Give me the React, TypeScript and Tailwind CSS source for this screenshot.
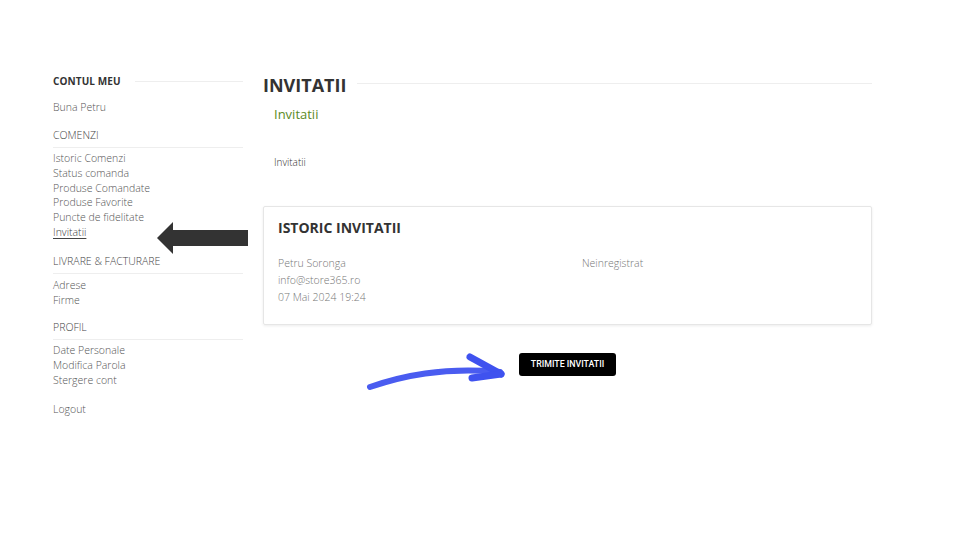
import React from "react";

const items1 = ["Istoric Comenzi", "Status comanda", "Produse Comandate", "Produse Favorite", "Puncte de fidelitate"];

export default function App() {
  return (
    <div className="relative w-[960px] h-[540px] bg-white flex pt-[73px] pl-[53px] font-['Open_Sans',sans-serif] overflow-hidden">
      {/* Sidebar */}
      <div className="w-[190px] flex flex-col">
        <div className="flex items-center gap-[14px] h-[16px]">
          <span className="text-[10px] font-bold text-[#333] leading-[16px] tracking-[0.1px]">CONTUL MEU</span>
          <div className="flex-1 h-px bg-[#eeeeee]" />
        </div>
        <div className="mt-[11px] text-[10.5px] font-light leading-[15px] text-[#555]">Buna Petru</div>
        <div className="mt-[13px] pb-[4px] border-b border-[#eeeeee] text-[10.5px] font-light leading-[15px] text-[#444]">COMENZI</div>
        <div className="mt-[3px] flex flex-col text-[10.5px] font-light leading-[14.8px] text-[#555]">
          {items1.map((t) => (
            <span key={t}>{t}</span>
          ))}
          <span className="underline underline-offset-2 text-[#444]">Invitatii</span>
        </div>
        <div className="mt-[14px] pb-[4px] border-b border-[#eeeeee] text-[10.5px] font-light leading-[15px] text-[#444]">LIVRARE &amp; FACTURARE</div>
        <div className="mt-[4px] flex flex-col text-[10.5px] font-light leading-[14.8px] text-[#555]">
          <span>Adrese</span>
          <span>Firme</span>
        </div>
        <div className="mt-[13px] pb-[4px] border-b border-[#eeeeee] text-[10.5px] font-light leading-[15px] text-[#444]">PROFIL</div>
        <div className="mt-[3px] flex flex-col text-[10.5px] font-light leading-[14.8px] text-[#555]">
          <span>Date Personale</span>
          <span>Modifica Parola</span>
          <span>Stergere cont</span>
        </div>
        <div className="mt-[14px] text-[10.5px] font-light leading-[15px] text-[#555]">Logout</div>
      </div>

      {/* Main */}
      <div className="ml-[20px] w-[609px] flex flex-col">
        <div className="flex items-center gap-[11px] h-[24px]">
          <h1 className="text-[18px] font-bold text-[#333] leading-[24px]">INVITATII</h1>
          <div className="flex-1 h-px bg-[#eeeeee] -mt-[4px]" />
        </div>
        <div className="mt-[8px] pl-[11px] text-[13px] leading-[18px] text-[#5b8a1e]">Invitatii</div>
        <div className="mt-[32px] pl-[11px] text-[10px] font-light leading-[14px] text-[#333]">Invitatii</div>

        <div className="mt-[37px] h-[119px] border border-[#e6e6e6] rounded-[2px] shadow-[0_1px_3px_rgba(0,0,0,0.08)] px-[14px] pt-[11px]">
          <div className="text-[14px] font-bold text-[#333] leading-[20px]">ISTORIC INVITATII</div>
          <div className="mt-[17px] flex text-[10.5px] font-light leading-[17px] text-[#777]">
            <div className="w-[304px] flex flex-col">
              <span>Petru Soronga</span>
              <span>info@store365.ro</span>
              <span>07 Mai 2024 19:24</span>
            </div>
            <div>Neinregistrat</div>
          </div>
        </div>

        <div className="mt-[28px] flex justify-center">
          <button className="w-[97px] h-[23px] bg-black rounded-[3px] text-white text-[8.8px] font-medium font-['Roboto',sans-serif]">
            TRIMITE INVITATII
          </button>
        </div>
      </div>

      {/* Black annotation arrow */}
      <svg className="absolute left-[155px] top-[220px]" width="96" height="36" viewBox="0 0 96 36">
        <polygon points="2,18 18,2 18,10 93,10 93,26 18,26 18,34" fill="#333" />
      </svg>

      {/* Blue annotation arrow */}
      <svg className="absolute left-[362px] top-[350px]" width="148" height="46" viewBox="0 0 148 46">
        <path d="M8 37 C 40 26, 80 17, 138 22" stroke="#4a5cf0" strokeWidth="6" fill="none" strokeLinecap="round" />
        <path d="M108 7 L 139 24" stroke="#3f52ef" strokeWidth="7" fill="none" strokeLinecap="round" />
        <path d="M110 28 L 139 24" stroke="#3f52ef" strokeWidth="7" fill="none" strokeLinecap="round" />
      </svg>
    </div>
  );
}
